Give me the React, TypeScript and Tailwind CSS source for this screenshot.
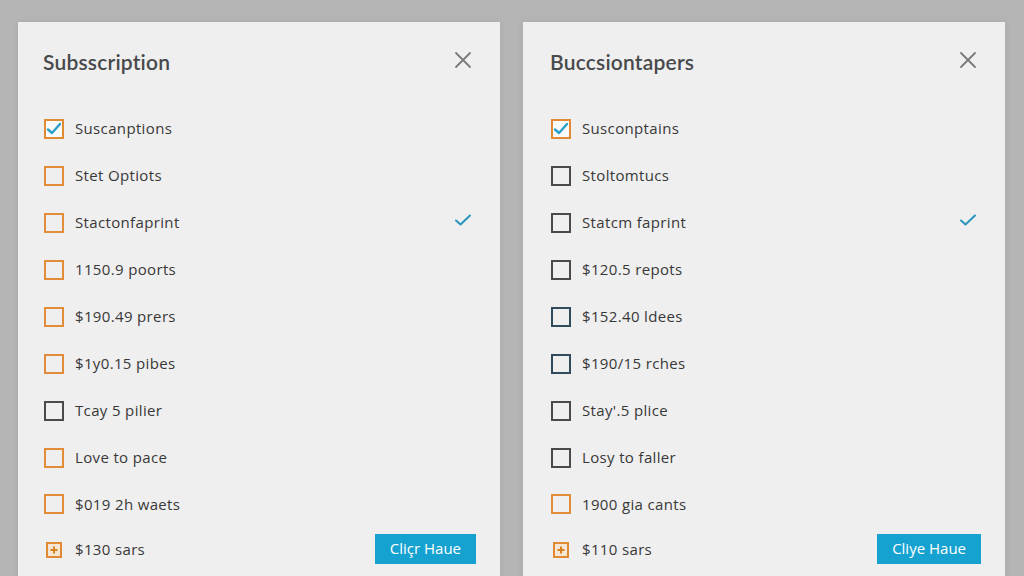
import React from "react";

type Box = "orange" | "dark" | "blue" | "checked" | "plus";
type Row = { label: string; box: Box; h: number; tick?: boolean; button?: string };

const CheckBox = ({ kind }: { kind: Box }) => {
  if (kind === "checked") {
    return (
      <div className="w-[20px] h-[20px] border-2 border-[#e08a33] bg-[#fafafa] flex items-center justify-center shrink-0">
        <svg width="16" height="14" viewBox="0 0 16 14">
          <path d="M2 7.5 L6 11 L14 2" fill="none" stroke="#2a9fc9" strokeWidth="2.4" strokeLinecap="round" strokeLinejoin="round" />
        </svg>
      </div>
    );
  }
  if (kind === "plus") {
    return (
      <div className="w-[20px] h-[20px] flex items-center justify-center shrink-0">
        <div className="w-[16px] h-[16px] border-2 border-[#e08a33] bg-[#f6e6d4] flex items-center justify-center">
          <svg width="10" height="10" viewBox="0 0 10 10">
            <path d="M5 1.5 V8.5 M1.5 5 H8.5" stroke="#d9801f" strokeWidth="2" />
          </svg>
        </div>
      </div>
    );
  }
  const cls =
    kind === "orange"
      ? "border-[#e38d3a]"
      : kind === "blue"
      ? "border-[#2f4b5c]"
      : "border-[#4a4a4a]";
  return <div className={`w-[20px] h-[20px] border-2 ${cls} shrink-0`} />;
};

const Panel = ({ title, rows, pad }: { title: string; rows: Row[]; pad: string }) => (
  <div className={`w-[482px] h-[560px] bg-[#efefef] pt-[24px] ${pad} pr-[24px] shadow-[0_0_6px_rgba(0,0,0,0.08)]`}>
    <div className="h-[32px] flex items-center justify-between">
      <div className="text-[21px] font-semibold text-[#48494b] tracking-[0.2px] -ml-[1px]" style={{ fontFamily: "Lato, 'Open Sans', sans-serif" }}>
        {title}
      </div>
      <svg width="18" height="18" viewBox="0 0 18 18" className="mr-[4px] -mt-[4px]">
        <path d="M2 2 L16 16 M16 2 L2 16" stroke="#7a7a7a" strokeWidth="1.8" strokeLinecap="round" />
      </svg>
    </div>
    <div className="mt-[27px] flex flex-col">
      {rows.map((r, i) => (
        <div key={i} className="flex items-center" style={{ height: r.h }}>
          <CheckBox kind={r.box} />
          <span className="ml-[11px] text-[15px] text-[#383838] tracking-[0.35px]" style={{ fontFamily: "'Open Sans', 'Noto Sans', sans-serif" }}>
            {r.label}
          </span>
          <div className="flex-1" />
          {r.tick && (
            <svg width="18" height="14" viewBox="0 0 18 14" className="mr-[4px] -mt-[5px]">
              <path d="M2 7.5 L6.5 11.5 L16 2.5" fill="none" stroke="#2a94bd" strokeWidth="2" strokeLinecap="round" strokeLinejoin="round" />
            </svg>
          )}
          {r.button && (
            <button className="h-[30px] px-[15px] bg-[#16a2d0] text-white text-[15px] -mt-[2px]" style={{ fontFamily: "'Open Sans', 'Noto Sans', sans-serif" }}>
              {r.button}
            </button>
          )}
        </div>
      ))}
    </div>
  </div>
);

const left: Row[] = [
  { label: "Suscanptions", box: "checked", h: 47 },
  { label: "Stet Optiots", box: "orange", h: 47 },
  { label: "Stactonfaprint", box: "orange", h: 47, tick: true },
  { label: "1150.9 poorts", box: "orange", h: 47 },
  { label: "$190.49 prers", box: "orange", h: 47 },
  { label: "$1y0.15 pibes", box: "orange", h: 47 },
  { label: "Tcay 5 pilier", box: "dark", h: 47 },
  { label: "Love to pace", box: "orange", h: 47 },
  { label: "$019 2h waets", box: "orange", h: 46 },
  { label: "$130 sars", box: "plus", h: 45, button: "Cliçr Haue" },
];

const right: Row[] = [
  { label: "Susconptains", box: "checked", h: 47 },
  { label: "Stoltomtucs", box: "dark", h: 47 },
  { label: "Statcm faprint", box: "dark", h: 47, tick: true },
  { label: "$120.5 repots", box: "dark", h: 47 },
  { label: "$152.40 ldees", box: "blue", h: 47 },
  { label: "$190/15 rches", box: "blue", h: 47 },
  { label: "Stay'.5 plice", box: "dark", h: 47 },
  { label: "Losy to faller", box: "dark", h: 47 },
  { label: "1900 gia cants", box: "orange", h: 46 },
  { label: "$110 sars", box: "plus", h: 45, button: "Cliye Haue" },
];

export default function App() {
  return (
    <div className="w-[1024px] h-[576px] overflow-hidden bg-[#b5b5b5] flex gap-[23px] pl-[18px] pt-[22px]">
      <Panel title="Subsscription" rows={left} pad="pl-[26px]" />
      <Panel title="Buccsiontapers" rows={right} pad="pl-[28px]" />
    </div>
  );
}
